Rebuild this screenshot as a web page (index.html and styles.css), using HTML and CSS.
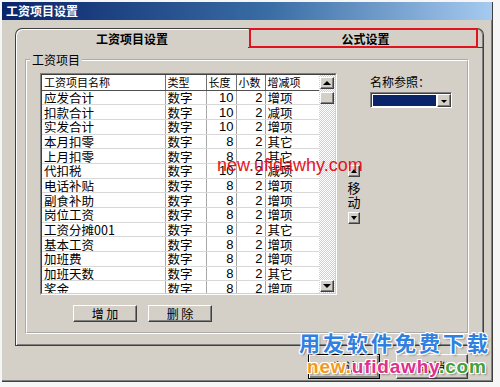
FILE: index.html
```html
<!DOCTYPE html>
<html lang="zh-CN">
<head>
    <meta charset="UTF-8">
    <title>工资项目设置</title>
    <link rel="stylesheet" href="styles.css">
</head>
<body>
<div class="window">
    <div class="titlebar">工资项目设置</div>
    <div class="client">
        <div class="tabs">
            <div class="tab-strip">
                <div class="tab tab-active">工资项目设置</div>
                <div class="tab tab-marked">公式设置</div>
            </div>
            <div class="tab-panel">
                <fieldset class="group">
                    <legend>工资项目</legend>
                    <div class="group-body">
                        <div class="list">
                            <div class="list-inner">
                                <div class="grid-wrap">
                                    <table class="grid">
                                        <colgroup>
                                            <col class="c-name">
                                            <col class="c-type">
                                            <col class="c-len">
                                            <col class="c-dec">
                                            <col class="c-kind">
                                        </colgroup>
                                        <thead>
                                        <tr><th>工资项目名称</th><th>类型</th><th>长度</th><th>小数</th><th>增减项</th></tr>
                                        </thead>
                                        <tbody>
                                        <tr><td>应发合计</td><td>数字</td><td class="num">10</td><td class="num">2</td><td>增项</td></tr>
                                        <tr><td>扣款合计</td><td>数字</td><td class="num">10</td><td class="num">2</td><td>减项</td></tr>
                                        <tr><td>实发合计</td><td>数字</td><td class="num">10</td><td class="num">2</td><td>增项</td></tr>
                                        <tr><td>本月扣零</td><td>数字</td><td class="num">8</td><td class="num">2</td><td>其它</td></tr>
                                        <tr><td>上月扣零</td><td>数字</td><td class="num">8</td><td class="num">2</td><td>其它</td></tr>
                                        <tr><td>代扣税</td><td>数字</td><td class="num">10</td><td class="num">2</td><td>减项</td></tr>
                                        <tr><td>电话补贴</td><td>数字</td><td class="num">8</td><td class="num">2</td><td>增项</td></tr>
                                        <tr><td>副食补助</td><td>数字</td><td class="num">8</td><td class="num">2</td><td>增项</td></tr>
                                        <tr><td>岗位工资</td><td>数字</td><td class="num">8</td><td class="num">2</td><td>增项</td></tr>
                                        <tr><td>工资分摊001</td><td>数字</td><td class="num">8</td><td class="num">2</td><td>其它</td></tr>
                                        <tr><td>基本工资</td><td>数字</td><td class="num">8</td><td class="num">2</td><td>增项</td></tr>
                                        <tr><td>加班费</td><td>数字</td><td class="num">8</td><td class="num">2</td><td>增项</td></tr>
                                        <tr><td>加班天数</td><td>数字</td><td class="num">8</td><td class="num">2</td><td>其它</td></tr>
                                        <tr><td>奖金</td><td>数字</td><td class="num">8</td><td class="num">2</td><td>增项</td></tr>
                                        </tbody>
                                    </table>
                                </div>
                                <div class="vscroll">
                                    <div class="sb-btn sb-up"></div>
                                    <div class="sb-thumb"></div>
                                    <div class="sb-track"></div>
                                    <div class="sb-btn sb-down"></div>
                                </div>
                            </div>
                        </div>
                        <div class="mover">
                            <div class="arrow-btn arrow-up"></div>
                            <div class="mover-text">移<br>动</div>
                            <div class="arrow-btn arrow-down"></div>
                        </div>
                        <div class="side">
                            <div class="side-label">名称参照：</div>
                            <div class="combo">
                                <div class="combo-value"></div>
                                <div class="combo-btn"></div>
                            </div>
                        </div>
                    </div>
                    <div class="group-actions">
                        <button class="btn btn-small">增 加</button>
                        <button class="btn btn-small">删 除</button>
                    </div>
                </fieldset>
            </div>
        </div>
        <div class="dialog-actions">
            <button class="btn btn-wide btn-default">确 认</button>
            <button class="btn btn-wide">取 消</button>
        </div>
    </div>
</div>

<div class="mark mark-mid">new.ufidawhy.com</div>
<div class="mark mark-cn">用友软件免费下载</div>
<div class="mark mark-url"><span class="m-new">new.</span><span class="m-name">ufidawhy</span><span class="m-com">.com</span></div>
</body>
</html>
```

FILE: styles.css
```css
* {
    box-sizing: border-box;
}

body {
    margin: 0;
    width: 500px;
    height: 387px;
    overflow: hidden;
    position: relative;
    background: #f6f6f6;
    font-family: "Noto Sans CJK SC", sans-serif;
    font-size: 12px;
    color: #000;
}

.window {
    margin: 2px 0 0 2px;
    width: 491px;
    height: 380px;
    background: #d4d0c8;
    border-right: 1px solid #404040;
    border-bottom: 1px solid #404040;
    box-shadow: inset -1px -1px #808080;
}

.titlebar {
    height: 18px;
    padding-left: 4px;
    background: linear-gradient(to right, #0a246a, #3a6ea5 55%, #a6caf0);
    color: #fff;
    font-weight: bold;
    font-size: 12px;
    line-height: 18px;
}

.client {
    padding: 8px 0 0 13px;
}

.tabs {
    width: 469px;
}

.tab-strip {
    display: flex;
    height: 20px;
}

.tab {
    font-weight: bold;
    font-size: 12px;
    line-height: 19px;
    text-align: center;
}

.tab-active {
    width: 233px;
    border-top: 1px solid #404040;
    border-left: 1px solid #404040;
    border-radius: 7px 0 0 0;
    box-shadow: inset 1px 1px #fff;
}

.tab-marked {
    width: 236px;
    position: relative;
    border-top: 1px solid #404040;
    border-right: 1px solid #404040;
    border-bottom: 1px solid #404040;
    border-radius: 0 7px 0 0;
    box-shadow: inset -1px 0 #808080;
}

/* red highlight drawn over the second tab */
.tab-marked::after {
    content: "";
    position: absolute;
    left: 1px;
    right: 5px;
    top: -1px;
    bottom: -1px;
    border: 2px solid #e0141e;
}

.tab-panel {
    height: 298px;
    padding: 5px 0 0 9px;
    border: 1px solid #404040;
    border-top: 0;
    box-shadow: inset 1px 0 #fff, inset -1px -1px #808080;
}

.group {
    width: 444px;
    height: 281px;
    min-width: 0;
    margin: 0;
    padding: 6px 0 0 13px;
    border: 2px groove #fff;
}

.group legend {
    margin-left: -10px;
    padding: 0 2px;
    font-size: 12px;
    line-height: 14px;
}

.group-body {
    display: flex;
    align-items: flex-start;
    height: 222px;
}

.list {
    width: 297px;
    height: 222px;
    border: 1px solid;
    border-color: #808080 #fff #fff #808080;
}

.list-inner {
    display: flex;
    height: 100%;
    border: 1px solid;
    border-color: #404040 #d4d0c8 #d4d0c8 #404040;
    background: #fff;
}

.grid-wrap {
    width: 277px;
    overflow: hidden;
}

.grid {
    width: 277px;
    table-layout: fixed;
    border-collapse: collapse;
}

.c-name { width: 123px; }
.c-type { width: 41px; }
.c-len { width: 30px; }
.c-dec { width: 29px; }
.c-kind { width: 54px; }

.grid th {
    height: 15px;
    padding: 0 0 0 2px;
    font-weight: normal;
    font-size: 11px;
    line-height: 13px;
    text-align: left;
    white-space: nowrap;
    border-right: 1px solid #707070;
    border-bottom: 1px solid #505050;
}

.grid td {
    height: 14.7px;
    padding: 0 0 0 2px;
    font-size: 12.5px;
    line-height: 13px;
    white-space: nowrap;
    border-right: 1px solid #a8a8a8;
    border-bottom: 1px solid #d8d8d8;
}

.grid td.num {
    text-align: right;
    padding: 0 2px 0 0;
    font-family: "Liberation Sans", sans-serif;
    font-size: 13px;
}

.vscroll {
    width: 16px;
    display: flex;
    flex-direction: column;
    padding: 2px 0 0 1px;
    background: repeating-conic-gradient(#d4d0c8 0 25%, #fff 0 50%) 0 0 / 2px 2px;
}

.sb-btn,
.sb-thumb {
    width: 14px;
    height: 12px;
    background: #d4d0c8;
    border: 1px solid;
    border-color: #fff #404040 #404040 #fff;
    box-shadow: inset -1px -1px #808080;
    position: relative;
}

.sb-thumb {
    margin-top: 3px;
}

.sb-track {
    flex: 1;
}

.sb-btn::before,
.arrow-btn::before,
.combo-btn::before {
    content: "";
    position: absolute;
    left: 50%;
    top: 50%;
    margin: -2px 0 0 -4px;
    border-left: 4px solid transparent;
    border-right: 4px solid transparent;
}

.sb-up::before,
.arrow-up::before {
    border-bottom: 4px solid #000;
}

.sb-down::before,
.arrow-down::before,
.combo-btn::before {
    border-top: 4px solid #000;
}

.sb-down {
    margin-bottom: 1px;
}

.mover {
    width: 12px;
    margin-left: 11px;
    padding-top: 92px;
    display: flex;
    flex-direction: column;
    align-items: center;
}

.arrow-btn {
    width: 12px;
    height: 12px;
    position: relative;
    background: #d4d0c8;
    border: 1px solid;
    border-color: #fff #404040 #404040 #fff;
    box-shadow: inset -1px -1px #808080;
}

.arrow-btn::before {
    margin: -2px 0 0 -3px;
    border-left-width: 3px;
    border-right-width: 3px;
}

.mover-text {
    margin: 4px 0 3px;
    font-size: 13px;
    line-height: 14px;
    text-align: center;
}

.side {
    margin-left: 10px;
}

.side-label {
    margin-top: 2px;
    font-size: 12px;
    line-height: 14px;
}

.combo {
    display: flex;
    width: 82px;
    height: 16px;
    margin-top: 3px;
    border: 1px solid;
    border-color: #808080 #fff #fff #808080;
    box-shadow: inset 1px 1px #404040;
    padding: 1px 0 0 1px;
    background: #fff;
}

.combo-value {
    flex: 1;
    margin: 1px;
    background: #0a246a;
}

.combo-btn {
    width: 14px;
    position: relative;
    background: #d4d0c8;
    border: 1px solid;
    border-color: #fff #404040 #404040 #fff;
    box-shadow: inset -1px -1px #808080;
}

.combo-btn::before {
    margin: -1px 0 0 -3px;
    border-left-width: 3px;
    border-right-width: 3px;
    border-top-width: 3px;
}

.group-actions {
    display: flex;
    gap: 11px;
    margin-top: 10px;
    padding-left: 33px;
}

.btn {
    padding: 0;
    font-family: "Noto Sans CJK SC", sans-serif;
    font-size: 12px;
    line-height: 14px;
    color: #000;
    background: #d4d0c8;
    border: 1px solid;
    border-color: #fff #404040 #404040 #fff;
    box-shadow: inset -1px -1px #808080;
}

.btn-small {
    width: 64px;
    height: 17px;
}

.dialog-actions {
    display: flex;
    justify-content: flex-end;
    gap: 16px;
    width: 469px;
    margin-top: 8px;
    padding-right: 16px;
}

.btn-wide {
    width: 72px;
    height: 25px;
}

.btn-default {
    border-color: #000;
    box-shadow: inset 1px 1px #fff, inset -2px -2px #808080;
}

/* watermarks laid over the dialog */
.mark {
    position: absolute;
    white-space: nowrap;
}

.mark-mid {
    left: 217px;
    top: 156px;
    font-family: "Liberation Sans", sans-serif;
    font-size: 18px;
    line-height: 18px;
    color: #e3141e;
}

.mark-cn {
    left: 299px;
    top: 331px;
    font-family: "Noto Sans CJK SC", sans-serif;
    font-weight: bold;
    font-size: 21px;
    line-height: 22px;
    letter-spacing: 3px;
    color: #2f80e0;
    text-shadow: 1px 0 #fff, -1px 0 #fff, 0 1px #fff, 0 -1px #fff,
                 1px 1px #fff, -1px -1px #fff, 1px -1px #fff, -1px 1px #fff,
                 2px 2px 2px rgba(0, 0, 0, 0.35);
}

.mark-url {
    left: 307px;
    top: 356px;
    font-family: "Liberation Sans", sans-serif;
    font-weight: bold;
    font-size: 19px;
    line-height: 22px;
    letter-spacing: 0.8px;
    text-shadow: 1px 0 #fff, -1px 0 #fff, 0 1px #fff, 0 -1px #fff,
                 1px 1px #fff, -1px -1px #fff, 1px -1px #fff, -1px 1px #fff,
                 2px 2px 2px rgba(0, 0, 0, 0.35);
}

.m-new { color: #f39a1e; }
.m-name { color: #e0308e; }
.m-com { color: #3fa23a; }
```
